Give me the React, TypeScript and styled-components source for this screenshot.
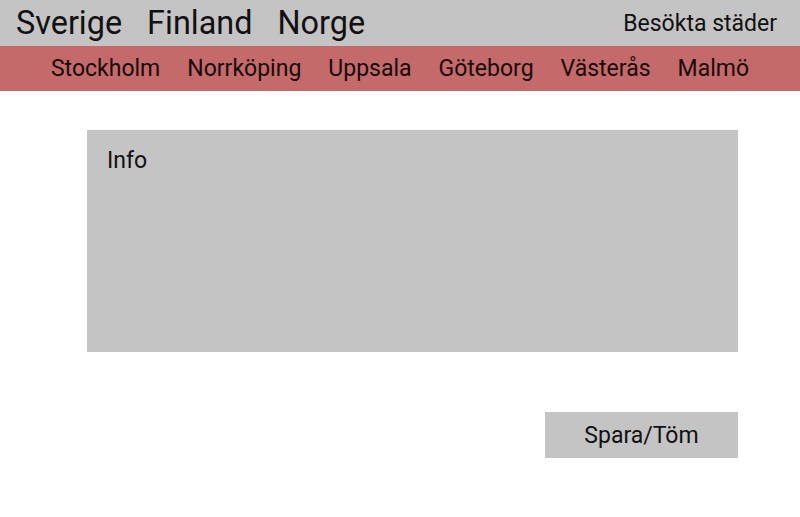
import React from "react";
import styled, { createGlobalStyle } from "styled-components";

const Global = createGlobalStyle`
  html, body { margin: 0; padding: 0; background: #ffffff; }
  body { font-family: Roboto, "Noto Sans", sans-serif; color: #111; }
`;

const TopBar = styled.header`
  height: 46px;
  background: #c4c4c4;
  display: flex;
  align-items: center;
  justify-content: space-between;
  padding: 0 23px 0 16px;
`;

const Countries = styled.nav`
  display: flex;
  gap: 25px;
`;

const Country = styled.span`
  font-size: 32.4px;
  line-height: 1;
`;

const Visited = styled.span`
  font-size: 23px;
`;

const CityBar = styled.nav`
  height: 45px;
  background: #c46a6a;
  display: flex;
  align-items: center;
  justify-content: center;
  gap: 27px;
`;

const City = styled.span`
  font-size: 23px;
  color: #1a0808;
`;

const Main = styled.main`
  display: flex;
  flex-direction: column;
  align-items: flex-end;
  padding: 39px 62px 0 87px;
`;

const InfoBox = styled.section`
  align-self: stretch;
  height: 222px;
  background: #c4c4c4;
  padding: 17px 20px;
  box-sizing: border-box;
  font-size: 23px;
`;

const Button = styled.button`
  margin-top: 60px;
  width: 193px;
  height: 46px;
  border: none;
  background: #c4c4c4;
  font-family: Roboto, "Noto Sans", sans-serif;
  font-size: 23px;
  color: #111;
  padding: 0;
`;

const countries = ["Sverige", "Finland", "Norge"];
const cities = ["Stockholm", "Norrköping", "Uppsala", "Göteborg", "Västerås", "Malmö"];

export default function App() {
  return (
    <>
      <Global />
      <TopBar>
        <Countries>
          {countries.map((c) => (
            <Country key={c}>{c}</Country>
          ))}
        </Countries>
        <Visited>Besökta städer</Visited>
      </TopBar>
      <CityBar>
        {cities.map((c) => (
          <City key={c}>{c}</City>
        ))}
      </CityBar>
      <Main>
        <InfoBox>Info</InfoBox>
        <Button>Spara/Töm</Button>
      </Main>
    </>
  );
}
